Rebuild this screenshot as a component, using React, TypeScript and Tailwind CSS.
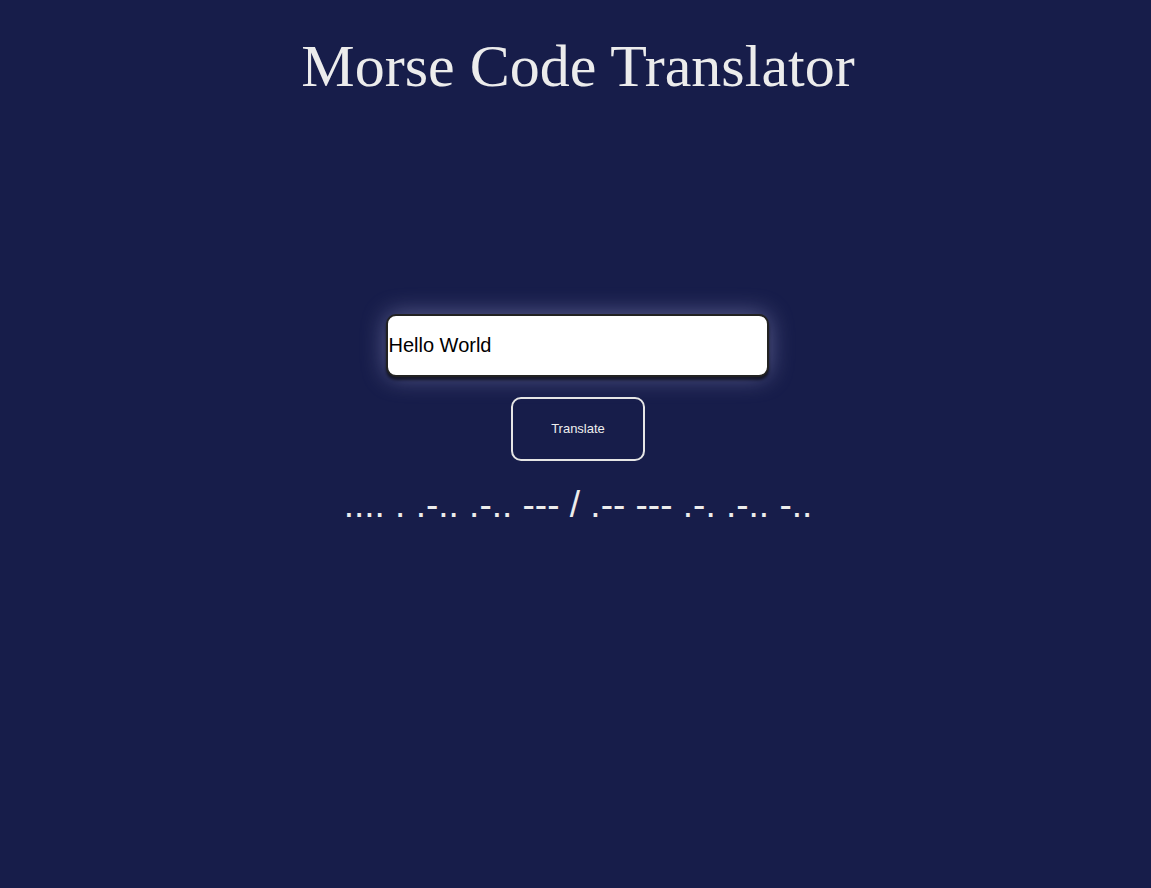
import { useState } from "react";

const MORSE: Record<string, string> = {
  a: ".-", b: "-...", c: "-.-.", d: "-..", e: ".", f: "..-.", g: "--.", h: "....",
  i: "..", j: ".---", k: "-.-", l: ".-..", m: "--", n: "-.", o: "---", p: ".--.",
  q: "--.-", r: ".-.", s: "...", t: "-", u: "..-", v: "...-", w: ".--", x: "-..-",
  y: "-.--", z: "--..", " ": "/",
};

function toMorse(text: string) {
  return text
    .toLowerCase()
    .split("")
    .map((c) => MORSE[c] ?? "")
    .join(" ");
}

function App() {
  const [text, setText] = useState("Hello World");
  const [output, setOutput] = useState(toMorse("Hello World"));

  return (
    <div className="min-h-[888px] bg-[#171d4a] flex flex-col items-center pl-[5px]">
      <h1 className="mt-[30px] text-[60px] leading-[72px] text-[#ececec] font-['Liberation_Serif',serif]">
        Morse Code Translator
      </h1>
      <div className="mt-[212px] flex flex-col items-center font-['Liberation_Sans',Arial,sans-serif]">
        <input
          type="text"
          value={text}
          onChange={(e) => setText(e.target.value)}
          className="w-[383px] h-[63px] bg-white text-black text-[20px] border-2 border-[#222] rounded-[10px] outline-none shadow-[0_3px_3px_rgba(0,0,0,0.6),0_0_24px_rgba(180,180,230,0.45)]"
        />
        <button
          onClick={() => setOutput(toMorse(text))}
          className="mt-[20px] w-[134px] h-[64px] border-2 border-[#e5e5e5] rounded-[10px] text-[13px] text-[#eee] bg-transparent"
        >
          Translate
        </button>
        <p className="mt-[16px] text-[37px] text-[#ececec] whitespace-pre">{output}</p>
      </div>
    </div>
  );
}

export default App;
